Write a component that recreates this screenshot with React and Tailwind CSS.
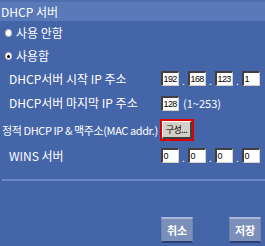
const font = { fontFamily: '"Noto Sans CJK KR", "Noto Sans", sans-serif' };

function IpBox({ value }) {
  return (
    <div className="w-[18px] h-[15px] bg-white border-t-2 border-l-2 border-t-[#404040] border-l-[#404040] border-b border-r border-b-[#d4d0c8] border-r-[#d4d0c8] text-black text-[9px] leading-[12px] tracking-[-0.6px] pl-[0.5px] font-['Liberation_Sans',sans-serif] overflow-hidden whitespace-nowrap">
      {value}
    </div>
  );
}

function IpGroup({ values }) {
  return (
    <div className="flex items-end">
      {values.map((v, i) => (
        <div key={i} className="flex items-end">
          {i > 0 && <span className="w-[9px] text-center text-white text-[10px] leading-[10px]">.</span>}
          <IpBox value={v} />
        </div>
      ))}
    </div>
  );
}

function Radio({ checked, label }) {
  return (
    <div className="flex items-center h-full pl-[5px]">
      <div className="w-[7px] h-[8px] rounded-full bg-white border border-[#c0c0c0] flex items-center justify-center">
        {checked && <div className="w-[3px] h-[3px] rounded-full bg-black" />}
      </div>
      <span className="ml-[4px] text-[12px] text-white">{label}</span>
    </div>
  );
}

function NavButton({ label }) {
  return (
    <button className="w-[32px] h-[26px] bg-[#7b8fbb] border-t-2 border-t-[#a9b8d8] border-b-2 border-b-[#2b3f70] border-x border-x-[#6d82b0] text-white text-[11px] font-bold leading-none">
      {label}
    </button>
  );
}

export default function App() {
  return (
    <div className="w-[265px] h-[246px] bg-[#4565a9] overflow-hidden text-white" style={font}>
      <div className="h-[2px] bg-[#4e6eae]" />
      <div className="h-[19px] bg-[#5a79b8] flex items-center pl-[1px] text-[12px] leading-none">DHCP 서버</div>

      <div className="h-[24px]"><Radio label="사용 안함" /></div>
      <div className="h-[22px]"><Radio checked label="사용함" /></div>

      <div className="h-[23px] flex items-center">
        <div className="w-[161px] pl-[9px] text-[12px] whitespace-nowrap">DHCP서버 시작 IP 주소</div>
        <IpGroup values={["192", "168", "123", "1"]} />
      </div>

      <div className="h-[26px] flex items-center">
        <div className="w-[161px] pl-[9px] text-[12px] whitespace-nowrap">DHCP서버 마지막 IP 주소</div>
        <IpBox value="128" />
        <span className="ml-[4px] text-[11px]">(1~253)</span>
      </div>

      <div className="h-[28px] flex items-center">
        <div className="w-[160px] pl-[2px] text-[11px] tracking-[-0.4px] whitespace-nowrap">정적 DHCP IP &amp; 맥주소(MAC addr.)</div>
        <div className="w-[34px] h-[22px] border-2 border-[#e00000] flex">
          <button className="flex-1 bg-[#d4d0c8] border-t border-l border-t-white border-l-white border-b-2 border-r-2 border-b-[#404040] border-r-[#404040] text-black text-[9px] tracking-[-0.5px] leading-none whitespace-nowrap px-0">
            구성...
          </button>
        </div>
      </div>

      <div className="h-[23px] flex items-center">
        <div className="w-[161px] pl-[9px] text-[12px] whitespace-nowrap">WINS 서버</div>
        <IpGroup values={["0", "0", "0", "0"]} />
      </div>

      <div className="mt-[12px] ml-[2px] h-[2px] bg-[#6787c4]" />

      <div className="mt-[36px] flex pl-[161px] gap-[36px]">
        <NavButton label="취소" />
        <NavButton label="저장" />
      </div>
    </div>
  );
}
